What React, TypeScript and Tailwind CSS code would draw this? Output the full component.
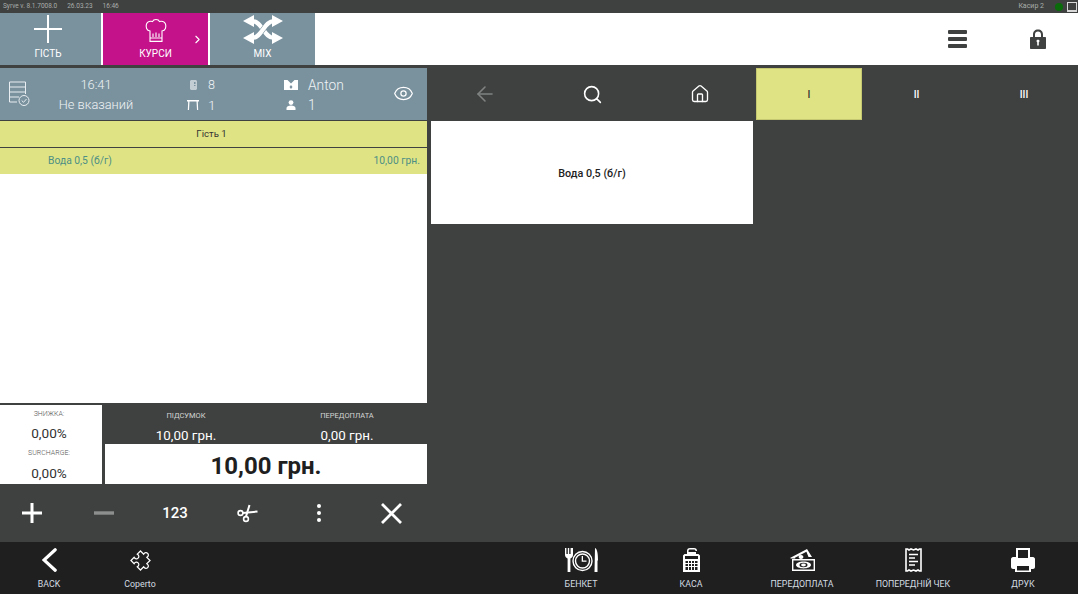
import { ArrowLeft, ChevronRight, Eye, Home, Search } from 'lucide-react';

const slate = 'bg-[#7a919e]';

const BigPlus = () => (
    <svg width="28" height="28" viewBox="0 0 28 28" stroke="white" strokeWidth="2" fill="none">
        <path d="M14 0 V28 M0 14 H28" />
    </svg>
);

const ChefHat = () => (
    <svg width="22" height="24" viewBox="0 0 22 24" fill="none" stroke="white" strokeWidth="1.1">
        <path d="M5 13 C1.5 12.5 0.5 9 1.5 6 C2.5 3.5 5.5 2.8 7.5 3.6 C8.5 0.8 13.5 0.8 14.5 3.6 C16.5 2.8 19.5 3.5 20.5 6 C21.5 9 20.5 12.5 17 13 L17 23.4 L5 23.4 Z" />
        <path d="M5 20 H17 M8 19 V15.5 M11 19 V14.5 M14 19 V15.5" />
    </svg>
);

const MixIcon = () => (
    <svg width="40" height="29" viewBox="0 0 40 29" fill="white">
        <path d="M9 6 C19 6 21 23 31 23" fill="none" stroke="white" strokeWidth="4.2" />
        <path d="M9 23 C19 23 21 6 31 6" fill="none" stroke="#7a919e" strokeWidth="5.4" />
        <path d="M9 23 C19 23 21 6 31 6" fill="none" stroke="white" strokeWidth="4.2" />
        <path d="M0 6 L11 0 L11 12 Z M0 23 L11 29 L11 17 Z M40 6 L29 0 L29 12 Z M40 23 L29 29 L29 17 Z" />
    </svg>
);

const OrderIcon = () => (
    <svg width="21" height="26" viewBox="0 0 21 26" fill="none" stroke="#e8eef1" strokeWidth="1">
        <path d="M0.5 21 V1 H16.5 V13 M0.5 6 H16.5 M0.5 11 H16.5 M0.5 16 H10 M0.5 21 H8" />
        <circle cx="15" cy="19.5" r="5" />
        <path d="M12.7 19.5 L14.5 21.3 L17.5 18" />
    </svg>
);

const WaiterIcon = () => (
    <svg width="14" height="10" viewBox="0 0 14 10" fill="white">
        <path fillRule="evenodd" d="M0 0 H3.5 L7 3.5 L10.5 0 H14 V10 H0 Z M7 5 L5.5 7 L7 9 L8.5 7 Z" />
    </svg>
);

const GuestsIcon = () => (
    <svg width="10" height="10" viewBox="0 0 10 10" fill="white">
        <circle cx="5" cy="2.6" r="2.4" />
        <path d="M0.5 10 V8 C0.5 6.5 2.5 5.5 5 5.5 C7.5 5.5 9.5 6.5 9.5 8 V10 Z" />
    </svg>
);

const TableIcon = () => (
    <svg width="12" height="10" viewBox="0 0 12 10" fill="white">
        <path d="M0 0 H12 V1.5 H10.8 L11.2 10 H10 L9.5 1.5 H2.5 L2 10 H0.8 L1.2 1.5 H0 Z" />
    </svg>
);

const CheckNoIcon = () => (
    <svg width="7" height="10" viewBox="0 0 7 10" fill="#c3ced4">
        <path d="M1 0 H6 L7 1 V9 L6 10 H1 L0 9 V1 Z M4 2 V4 H5.5 V2 Z M4 5 V6 H5.5 V5 Z" fillRule="evenodd" />
    </svg>
);

const LockIcon = () => (
    <svg width="16" height="20" viewBox="0 0 16 20" fill="#3f4140">
        <path fillRule="evenodd" d="M3 8 V5.5 C3 2.5 5 0.5 8 0.5 C11 0.5 13 2.5 13 5.5 V8 H15 C15.6 8 16 8.4 16 9 V19 C16 19.6 15.6 20 15 20 H1 C0.4 20 0 19.6 0 19 V9 C0 8.4 0.4 8 1 8 Z M5 8 H11 V5.5 C11 3.7 9.8 2.5 8 2.5 C6.2 2.5 5 3.7 5 5.5 Z M6.5 12 C6.5 11.2 7.2 10.7 8 10.7 C8.8 10.7 9.5 11.2 9.5 12 C9.5 12.6 9.2 13 8.8 13.2 V16.5 H7.2 V13.2 C6.8 13 6.5 12.6 6.5 12 Z" />
    </svg>
);

const ToolPlus = ({ color }: { color: string }) => (
    <svg width="20" height="20" viewBox="0 0 20 20" stroke={color} strokeWidth="3" fill="none">
        <path d="M10 0 V20 M0 10 H20" />
    </svg>
);

const ToolMinus = () => (
    <svg width="20" height="4" viewBox="0 0 20 4" fill="#8c8f8e">
        <rect width="20" height="3.4" y="0.3" />
    </svg>
);

const ScissorsIcon = () => (
    <svg width="21" height="19" viewBox="0 0 21 19" fill="none" stroke="white">
        <circle cx="3.5" cy="9" r="2.4" strokeWidth="1.6" />
        <circle cx="9" cy="15" r="2.4" strokeWidth="1.6" />
        <path d="M9 12.5 L12.5 1" strokeWidth="2" />
        <path d="M6 9 L20.5 7.5" strokeWidth="2" />
    </svg>
);

const CloseIcon = () => (
    <svg width="21" height="21" viewBox="0 0 21 21" stroke="white" strokeWidth="2.8" fill="none">
        <path d="M1 1 L20 20 M20 1 L1 20" />
    </svg>
);

const BackIcon = () => (
    <svg width="15" height="24" viewBox="0 0 15 24" stroke="white" strokeWidth="3.2" fill="none" strokeLinecap="round">
        <path d="M13.2 1.8 L2 12 L13.2 22.2" />
    </svg>
);

const PuzzleIcon = () => (
    <svg width="27" height="27" viewBox="0 0 24 24" stroke="white" strokeWidth="1.1" fill="none">
        <path transform="rotate(45 12 12)" d="M6 6 H10 C9 2 15 2 14 6 H18 V10 C22 9 22 15 18 14 V18 H14 C15 14 9 14 10 18 H6 V14 C10 15 10 9 6 10 Z" />
    </svg>
);

const BanquetIcon = () => (
    <svg width="33" height="24" viewBox="0 0 33 24" fill="white">
        <path d="M0 0 H1.4 V6 H2.8 V0 H4.2 V6 H5.6 V0 H7 V0 H8 V7 C8 9 6.5 10 5.4 10.5 V24 H2.6 V10.5 C1.5 10 0 9 0 7 Z" />
        <circle cx="17.5" cy="13" r="9.5" fill="none" stroke="white" strokeWidth="1.4" />
        <circle cx="17.5" cy="13" r="7" fill="none" stroke="white" strokeWidth="1.4" />
        <path d="M16.7 8 H18 V12.4 H21.5 V13.8 H16.7 Z" />
        <path d="M30 0 C32.5 1 33 7 33 12 L32.5 13 V24 H29.5 Z" />
    </svg>
);

const CashIcon = () => (
    <svg width="17" height="24" viewBox="0 0 17 24" fill="white">
        <path fillRule="evenodd" d="M4 6 V3 C4 1 5 0 7 0 H11 C13 0 14 1 14 3 H12.5 C12.5 2 12 1.5 11 1.5 H7 C6 1.5 5.5 2 5.5 3 V4 H13 V6 H15.5 L17 7.5 V24 H0 V7.5 L1.5 6 Z M2 8 V11 H15 V8 Z M2.5 13 V15 H5 V13 Z M6 13 V15 H8 V13 Z M9 13 V15 H11 V13 Z M12 13 V15 H14.5 V13 Z M2.5 16 V18 H5 V16 Z M6 16 V18 H8 V16 Z M9 16 V18 H11 V16 Z M12 16 V18 H14.5 V16 Z M2.5 19 V22 H5 V19 Z M6 19 V22 H8 V19 Z M9 19 V22 H11 V19 Z M12 19 V22 H14.5 V19 Z" />
    </svg>
);

const PrepayIcon = () => (
    <svg width="25" height="22" viewBox="0 0 25 22" fill="white">
        <path fillRule="evenodd" d="M0 9 L17 0 L22 8 H18.5 L16.4 2.8 L5 8.8 L5.3 9.5 H1 Z M11 6 A2.4 2 0 1 1 10.99 6 Z" />
        <path fillRule="evenodd" d="M2 10 H25 V22 H2 Z M3.4 11.4 V20.6 H23.6 V11.4 Z" />
        <path fillRule="evenodd" d="M6 16 C6 14 9.5 12.6 13.5 12.6 C17.5 12.6 21 14 21 16 C21 18 17.5 19.4 13.5 19.4 C9.5 19.4 6 18 6 16 Z" />
        <ellipse cx="13.5" cy="16" rx="4" ry="2.2" fill="#1f1f1f" />
        <ellipse cx="13.5" cy="16" rx="2.4" ry="1.4" />
    </svg>
);

const ReceiptIcon = () => (
    <svg width="17" height="24" viewBox="0 0 17 24" fill="none" stroke="white" strokeWidth="1.6">
        <path d="M1 1 H2.5 L4 2 L6 1 L8.5 2 L11 1 L13 2 L14.5 1 H16 V23 H14.5 L13 22 L11 23 L8.5 22 L6 23 L4 22 L2.5 23 H1 Z" />
        <path d="M4 6.5 H13 M4 10 H10 M4 13.5 H13 M4 17 H10" strokeWidth="1.4" />
    </svg>
);

const PrintIcon = () => (
    <svg width="24" height="24" viewBox="0 0 24 24" fill="white">
        <path fillRule="evenodd" d="M5 0 H19 V9 H22 C23 9 24 10 24 11 V19 C24 20 23 21 22 21 H20 V24 H4 V21 H2 C1 21 0 20 0 19 V11 C0 10 1 9 2 9 H5 Z M7 2 V10 H17 V2 Z M6 18 V22.4 H18 V18 Z" />
    </svg>
);

const FooterButton = ({ icon, label, className }: { icon: React.ReactNode; label: string; className: string }) => (
    <div className={`flex flex-col items-center ${className}`}>
        <div className='h-[30px] flex items-center justify-center'>{icon}</div>
        <span className='text-[8.8px] leading-[12px] mt-[3px] text-[#d4dde2] whitespace-nowrap'>{label}</span>
    </div>
);

const App = () => {
    return (
        <div className="w-[1078px] h-[594px] overflow-hidden flex flex-col bg-[#3f4140] font-['Roboto',sans-serif]">

            {/* status line */}
            <div className='h-[13px] flex items-center justify-between pl-[3px] text-[#a9adab]'>
                <div className='flex gap-[10px] text-[6.5px]'>
                    <span>Syrve v. 8.1.7008.0</span>
                    <span>26.03.23</span>
                    <span>16:46</span>
                </div>
                <div className='flex items-center text-[7px]'>
                    <span>Касир 2</span>
                    <span className='w-[8px] h-[8px] rounded-full bg-[#0a6b0a] ml-[11px]'></span>
                    <span className='w-[10px] h-[10px] border border-[#d8d8d8] border-b-2 ml-[4px] mr-[1px]'></span>
                </div>
            </div>

            {/* top bar */}
            <div className='h-[52px] flex bg-white text-white'>
                <div className={`w-[101px] pr-[5px] ${slate} flex flex-col items-center pt-[2px]`}>
                    <BigPlus />
                    <span className='text-[10px] leading-[12px] mt-[5px]'>ГІСТЬ</span>
                </div>
                <div className='w-[105px] ml-[2px] bg-[#c4138a] flex flex-col items-center relative pt-[5px]'>
                    <ChefHat />
                    <span className='text-[10px] leading-[12px] mt-[6px]'>КУРСИ</span>
                    <ChevronRight size={13} strokeWidth={2} className='absolute right-[4px] top-[20px]' />
                </div>
                <div className={`w-[105px] ml-[2px] ${slate} flex flex-col items-center pt-[2px]`}>
                    <MixIcon />
                    <span className='text-[10px] leading-[12px] mt-[4px]'>MIX</span>
                </div>
                <div className='flex-1 flex items-center justify-end'>
                    <div className='w-[19px] h-[18px] flex flex-col justify-between mr-[63px]'>
                        <span className='h-[4px] rounded-[1px] bg-[#3f4140]'></span>
                        <span className='h-[4px] rounded-[1px] bg-[#3f4140]'></span>
                        <span className='h-[4px] rounded-[1px] bg-[#3f4140]'></span>
                    </div>
                    <div className='mr-[32px] flex'><LockIcon /></div>
                </div>
            </div>

            <div className='flex-1 flex mt-[3px] min-h-0'>
                {/* order column */}
                <div className='w-[427px] flex flex-col'>
                    <div className={`h-[52px] ${slate} flex text-[#eef3f5] relative`}>
                        <div className='w-[58px] flex items-center pl-[9px]'><OrderIcon /></div>
                        <div className='w-[76px] flex flex-col items-center pt-[7px] text-[12.8px] font-light leading-[20px]'>
                            <span>16:41</span>
                            <span className='whitespace-nowrap'>Не вказаний</span>
                        </div>
                        <div className='ml-[52px] w-[98px] grid grid-cols-[14px_1fr] content-start gap-x-[8px] items-center pt-[7px] text-[12.6px] font-light leading-[20px]'>
                            <div className='flex justify-center'><CheckNoIcon /></div><span>8</span>
                            <div className='flex justify-center'><TableIcon /></div><span className='text-[13.6px]'>1</span>
                        </div>
                        <div className='grid grid-cols-[14px_1fr] content-start gap-x-[10px] items-center pt-[7px] text-[13.8px] font-light leading-[20px]'>
                            <div className='flex justify-center'><WaiterIcon /></div><span>Anton</span>
                            <div className='flex justify-center'><GuestsIcon /></div><span>1</span>
                        </div>
                        <Eye size={21} strokeWidth={1.4} className='absolute right-[13px] top-[15px] text-white' />
                    </div>

                    <div className='h-[26px] mt-[1px] pr-[4px] bg-[#e0e384] flex items-center justify-center text-[9.6px] text-[#333]'>Гість 1</div>
                    <div className='h-[26px] mt-[1px] bg-[#e0e384] flex items-center justify-between pl-[48px] pr-[7px] text-[10.3px] text-[#4d8f85]'>
                        <span>Вода 0,5 (б/г)</span>
                        <span>10,00 грн.</span>
                    </div>
                    <div className='h-[229px] bg-white'></div>

                    {/* totals */}
                    <div className='h-[79px] mt-[2px] flex'>
                        <div className='w-[102px] pr-[4px] bg-white flex flex-col items-center text-[#333]'>
                            <span className='text-[7px] font-light leading-[8px] mt-[5px] text-[#555]'>ЗНИЖКА:</span>
                            <span className='text-[13.6px] leading-[17px] mt-[7px]'>0,00%</span>
                            <span className='text-[7px] font-light leading-[8px] mt-[7px] text-[#555]'>SURCHARGE:</span>
                            <span className='text-[13.6px] leading-[17px] mt-[8px]'>0,00%</span>
                        </div>
                        <div className='flex-1 ml-[3px] flex flex-col'>
                            <div className='h-[41px] flex text-white'>
                                <div className='w-[162px] flex flex-col items-center'>
                                    <span className='text-[7.5px] leading-[9px] mt-[6px] text-[#d4d6d5]'>ПІДСУМОК</span>
                                    <span className='text-[13.4px] leading-[17px] mt-[7px]'>10,00 грн.</span>
                                </div>
                                <div className='flex-1 flex flex-col items-center'>
                                    <span className='text-[7.5px] leading-[9px] mt-[6px] text-[#d4d6d5]'>ПЕРЕДОПЛАТА</span>
                                    <span className='text-[13.4px] leading-[17px] mt-[7px]'>0,00 грн.</span>
                                </div>
                            </div>
                            <div className='flex-1 bg-white flex items-center justify-center pt-[4px] text-[24px] font-bold text-[#1f1f1f]'>10,00 грн.</div>
                        </div>
                    </div>

                    {/* order actions */}
                    <div className='h-[58px] flex items-center text-white'>
                        <div className='w-[64px] flex justify-center'><ToolPlus color='white' /></div>
                        <div className='w-[72px] ml-[4px] flex justify-center'><ToolMinus /></div>
                        <div className='w-[72px] pr-[1px] flex justify-center text-[15px] font-medium'>123</div>
                        <div className='w-[72px] flex justify-center'><ScissorsIcon /></div>
                        <div className='w-[72px] flex flex-col items-center gap-[3px]'>
                            <span className='w-[4px] h-[4px] rounded-full bg-white'></span>
                            <span className='w-[4px] h-[4px] rounded-full bg-white'></span>
                            <span className='w-[4px] h-[4px] rounded-full bg-white'></span>
                        </div>
                        <div className='w-[72px] flex justify-center'><CloseIcon /></div>
                    </div>
                </div>

                {/* menu column */}
                <div className='flex-1 ml-[4px] flex flex-col'>
                    <div className='h-[52px] flex text-white'>
                        <div className='w-[107px] flex items-center justify-center'><ArrowLeft size={24} strokeWidth={1.6} className='text-[#7f8281]' /></div>
                        <div className='w-[108px] flex items-center justify-center'><Search size={21} strokeWidth={1.8} /></div>
                        <div className='w-[107px] flex items-center justify-center'><Home size={20} strokeWidth={1.6} /></div>
                        <div className='w-[106px] ml-[3px] mr-[1px] bg-[#e0e384] border border-[#c5c870] flex items-center justify-center text-[10px] font-medium text-[#333]'>I</div>
                        <div className='w-[107px] flex items-center justify-center text-[10px] font-medium'>II</div>
                        <div className='flex-1 flex items-center justify-center text-[10px] font-medium'>III</div>
                    </div>
                    <div className='w-[322px] h-[103px] mt-[1px] bg-white flex items-center justify-center pt-[4px] text-[10.8px] font-medium text-[#222]'>Вода 0,5 (б/г)</div>
                </div>
            </div>

            {/* bottom bar */}
            <div className='h-[52px] bg-[#1f1f1f] flex pt-[3px]'>
                <FooterButton className='w-[98px]' icon={<BackIcon />} label='BACK' />
                <FooterButton className='w-[84px]' icon={<PuzzleIcon />} label='Coperto' />
                <FooterButton className='w-[100px] ml-[349px]' icon={<BanquetIcon />} label='БЕНКЕТ' />
                <FooterButton className='w-[118px] ml-[1px]' icon={<CashIcon />} label='КАСА' />
                <FooterButton className='w-[102px] ml-[1px]' icon={<PrepayIcon />} label='ПЕРЕДОПЛАТА' />
                <FooterButton className='w-[120px]' icon={<ReceiptIcon />} label='ПОПЕРЕДНІЙ ЧЕК' />
                <FooterButton className='w-[100px]' icon={<PrintIcon />} label='ДРУК' />
            </div>
        </div>
    );
};

export default App;
